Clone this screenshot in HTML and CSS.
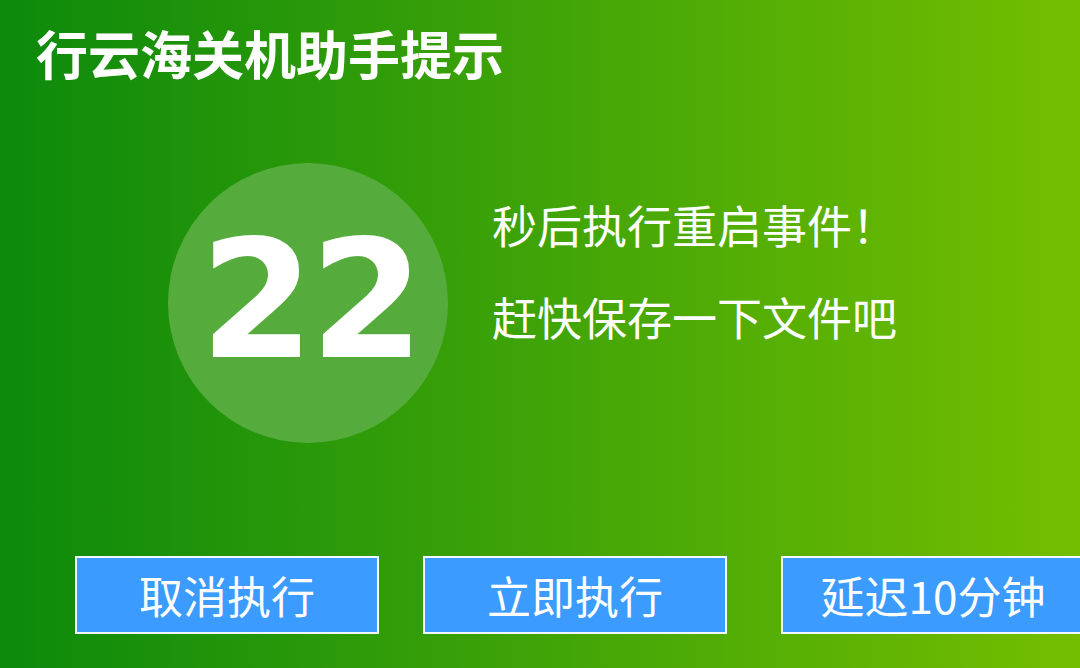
FILE: index.html
```html
<!DOCTYPE html>
<html lang="zh-CN">
<head>
<meta charset="utf-8">
<title>行云海关机助手提示</title>
<link rel="stylesheet" href="styles.css">
</head>
<body>
<div class="dialog">
  <div class="title">行云海关机助手提示</div>
  <div class="main">
    <div class="circle"><span class="count">22</span></div>
    <div class="messages">
      <div class="line">秒后执行重启事件！</div>
      <div class="line">赶快保存一下文件吧</div>
    </div>
  </div>
  <div class="buttons">
    <div class="btn">取消执行</div>
    <div class="btn">立即执行</div>
    <div class="btn btn-last">延迟10分钟</div>
  </div>
</div>
</body>
</html>
```
FILE: styles.css
```css
html, body {
  margin: 0;
  padding: 0;
  width: 1080px;
  height: 668px;
  overflow: hidden;
}
.dialog {
  width: 1080px;
  height: 668px;
  box-sizing: border-box;
  background: linear-gradient(to right, #0c890b 0%, #3aa108 45%, #74be00 100%);
  font-family: "Noto Sans CJK SC", "Noto Sans", sans-serif;
  color: #fff;
  display: flex;
  flex-direction: column;
  overflow: hidden;
}
.title {
  padding: 27px 0 0 36px;
  font-size: 52px;
  line-height: 52px;
  height: 52px;
  font-weight: bold;
  white-space: nowrap;
}
.main {
  margin-top: 84px;
  padding-left: 168px;
  display: flex;
  align-items: flex-start;
}
.circle {
  width: 280px;
  height: 280px;
  border-radius: 50%;
  background: #55ac3c;
  display: flex;
  align-items: center;
  justify-content: center;
}
.count {
  font-family: "DejaVu Sans", sans-serif;
  font-weight: bold;
  font-size: 164px;
  line-height: 1;
  letter-spacing: -4px;
  margin-top: -4px;
  margin-left: 4px;
}
.messages {
  margin-left: 44px;
  margin-top: 16px;
}
.line {
  font-size: 45px;
  line-height: 92px;
  white-space: nowrap;
}
.buttons {
  margin-top: 113px;
  padding-left: 75px;
  display: flex;
}
.btn {
  flex: none;
  width: 304px;
  height: 78px;
  box-sizing: border-box;
  border: 2px solid #f2f8ff;
  background: #3b9bff;
  font-size: 44px;
  line-height: 74px;
  text-align: center;
  white-space: nowrap;
  margin-right: 44px;
}
.btn-last {
  margin-left: 10px;
  margin-right: 0;
}
```
